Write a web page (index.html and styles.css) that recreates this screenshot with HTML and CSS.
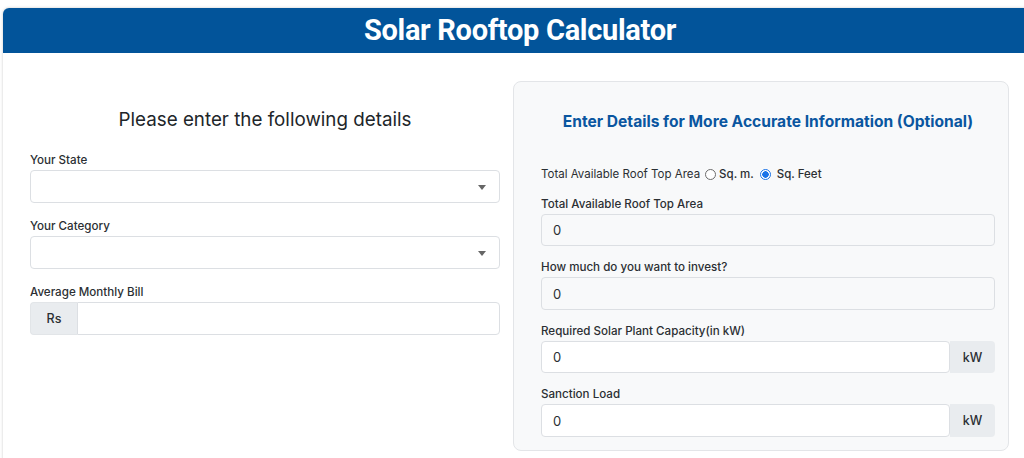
FILE: index.html
```html
<!DOCTYPE html>
<html>
<head>
<meta charset="utf-8">
<link rel="stylesheet" href="styles.css">
</head>
<body>
<div class="card">
  <div class="card-header">Solar Rooftop Calculator</div>
  <div class="card-body">
    <div class="col-left">
      <h2 class="left-title">Please enter the following details</h2>
      <div class="field">
        <label class="lbl">Your State</label>
        <div class="select"><span class="caret"></span></div>
      </div>
      <div class="field">
        <label class="lbl">Your Category</label>
        <div class="select"><span class="caret"></span></div>
      </div>
      <div class="field">
        <label class="lbl">Average Monthly Bill</label>
        <div class="group">
          <span class="addon addon-left">Rs</span>
          <div class="input input-grow"></div>
        </div>
      </div>
    </div>
    <div class="panel">
      <h3 class="panel-title">Enter Details for More Accurate Information (Optional)</h3>
      <div class="radio-row">
        <span>Total Available Roof Top Area</span>
        <span class="radio"></span><span class="radio-lbl">Sq. m.</span>
        <span class="radio checked"></span><span class="radio-lbl sp">Sq. Feet</span>
      </div>
      <div class="pfield">
        <label class="lbl">Total Available Roof Top Area</label>
        <div class="input pinput input-light">0</div>
      </div>
      <div class="pfield">
        <label class="lbl">How much do you want to invest?</label>
        <div class="input pinput input-light tall">0</div>
      </div>
      <div class="pfield">
        <label class="lbl">Required Solar Plant Capacity(in kW)</label>
        <div class="group pgroup">
          <div class="input pinput input-grow">0</div>
          <span class="addon addon-right">kW</span>
        </div>
      </div>
      <div class="pfield">
        <label class="lbl">Sanction Load</label>
        <div class="group pgroup tall">
          <div class="input pinput input-grow tall">0</div>
          <span class="addon addon-right">kW</span>
        </div>
      </div>
    </div>
  </div>
</div>
</body>
</html>
```

FILE: styles.css
```css
* { box-sizing: border-box; }
html, body { margin: 0; padding: 0; background: #fff; overflow: hidden; }
body { font-family: Inter, "Open Sans", Arial, sans-serif; color: #212529; }

.card {
  margin: 8px 0 0 3px;
  width: 1034px;
  border-radius: 6px 6px 0 0;
  box-shadow: 0 0 3px rgba(0,0,0,0.22);
  background: #fff;
  height: 470px;
}
.card-header {
  background: #02549a;
  color: #fff;
  height: 45px;
  border-radius: 6px 6px 0 0;
  text-align: center;
  font-family: Roboto, Arial, sans-serif;
  font-weight: 700;
  font-size: 29px;
  line-height: 45px;
  letter-spacing: -0.3px;
}
.card-body {
  display: flex;
  padding: 28px 0 0 27px;
  gap: 13px;
  align-items: flex-start;
}
.col-left { width: 470px; padding-top: 27px; }
.left-title {
  margin: 0 0 20px;
  font-weight: 400;
  font-size: 18.8px;
  line-height: 24px;
  text-align: center;
  color: #212529;
}
.field { margin-bottom: 15px; }
.lbl {
  display: block;
  font-size: 11.6px;
  font-weight: 500;
  line-height: 16px;
  margin-bottom: 2px;
  color: #2b2f33;
}
.select {
  height: 33px;
  border: 1px solid #dcdfe3;
  border-radius: 4px;
  background: #fff;
  position: relative;
}
.caret {
  position: absolute;
  right: 13px;
  top: 14px;
  width: 0; height: 0;
  border-left: 4.5px solid transparent;
  border-right: 4.5px solid transparent;
  border-top: 5px solid #666;
}
.group { display: flex; height: 33px; }
.addon {
  background: #e9ecef;
  font-size: 12.5px;
  font-weight: 500;
  display: flex;
  align-items: center;
  justify-content: center;
  color: #2b2f33;
}
.addon-left { width: 47px; border-radius: 4px 0 0 4px; border: 1px solid #e2e5e8; border-right: 0; }
.addon-right { width: 45px; border-radius: 0 4px 4px 0; }
.input {
  height: 33px;
  border: 1px solid #dcdfe3;
  border-radius: 4px;
  background: #fff;
  font-size: 13px;
  padding-left: 11px;
  display: flex;
  align-items: center;
  color: #2b2f33;
}
.input-grow { flex: 1; }
.addon-left + .input { border-radius: 0 4px 4px 0; }
.input-light { background: #f8f9fa; }
.pinput { height: 32px; }
.pgroup { height: 32px; }
.pinput.tall, .pgroup.tall { height: 33px; }

.panel {
  width: 496px;
  background: #f8f9fa;
  border: 1px solid #e3e5e8;
  border-radius: 8px;
  padding: 29px 13px 12px 27px;
  height: 370px;
}
.panel-title {
  margin: 0 0 33px;
  font-size: 15.6px;
  line-height: 22px;
  font-weight: 700;
  color: #0a56a0;
  text-align: center;
}
.radio-row {
  display: flex;
  align-items: center;
  font-size: 11.5px;
  font-weight: 400;
  line-height: 16px;
  color: #2b2f33;
  margin-bottom: 14px;
}
.radio {
  width: 11px; height: 11px;
  border: 1px solid #6c6c6c;
  border-radius: 50%;
  margin: 0 3px 0 5px;
  background: #fff;
}
.radio.checked {
  border: 1px solid #1a73e8;
  background: radial-gradient(circle, #1a73e8 0 3px, #fff 3.5px);
  margin-left: 6px;
}
.radio-lbl { font-weight: 500; }
.radio-lbl.sp { margin-left: 3px; }
.pfield { margin-bottom: 13px; }
```
